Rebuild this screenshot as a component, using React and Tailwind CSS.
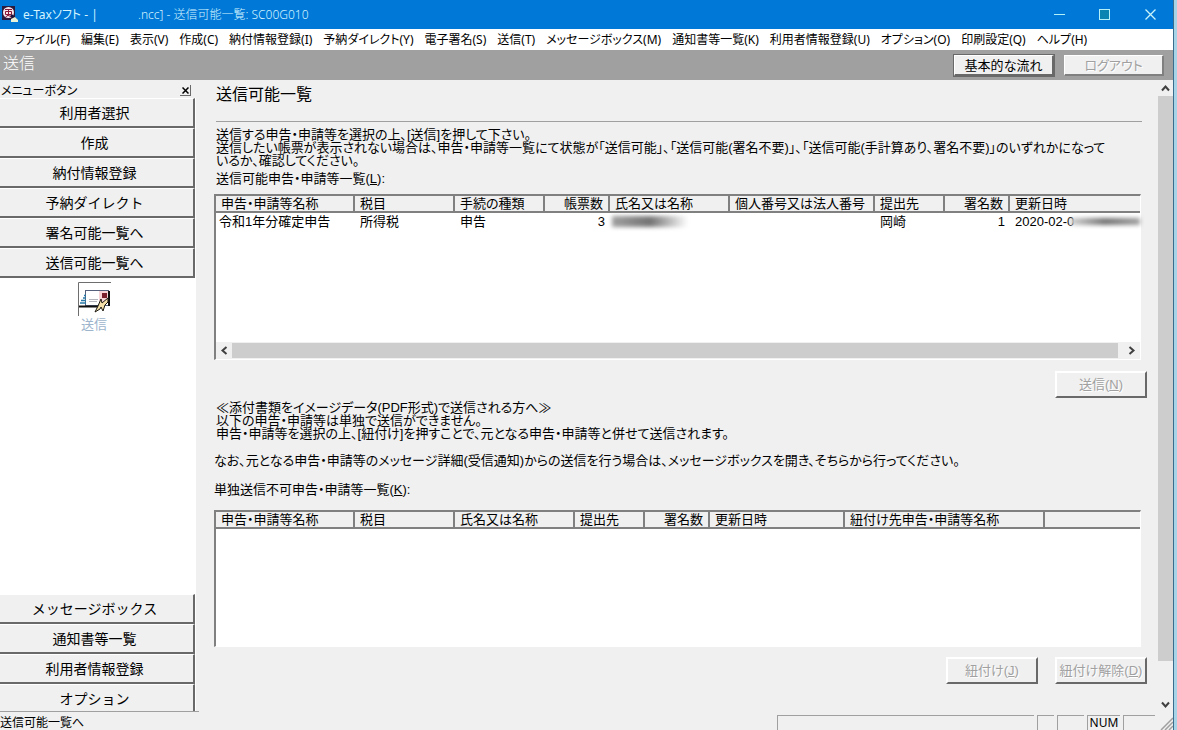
import React from "react";

const menuItems = [
  "ファイル(F)",
  "編集(E)",
  "表示(V)",
  "作成(C)",
  "納付情報登録(I)",
  "予納ダイレクト(Y)",
  "電子署名(S)",
  "送信(T)",
  "メッセージボックス(M)",
  "通知書等一覧(K)",
  "利用者情報登録(U)",
  "オプション(O)",
  "印刷設定(Q)",
  "ヘルプ(H)",
];

const topButtons = [
  "利用者選択",
  "作成",
  "納付情報登録",
  "予納ダイレクト",
  "署名可能一覧へ",
  "送信可能一覧へ",
];

const bottomButtons = [
  "メッセージボックス",
  "通知書等一覧",
  "利用者情報登録",
  "オプション",
];

const sendColumns = [
  { label: "申告・申請等名称", width: "w-[139px]" },
  { label: "税目", width: "w-[100px]" },
  { label: "手続の種類", width: "w-[90px]" },
  { label: "帳票数", width: "w-[65px]", right: true },
  { label: "氏名又は名称", width: "w-[120px]" },
  { label: "個人番号又は法人番号", width: "w-[145px]" },
  { label: "提出先", width: "w-[70px]" },
  { label: "署名数", width: "w-[65px]", right: true },
  { label: "更新日時", width: "", last: true },
];

const linkColumns = [
  { label: "申告・申請等名称", width: "w-[139px]" },
  { label: "税目", width: "w-[100px]" },
  { label: "氏名又は名称", width: "w-[120px]" },
  { label: "提出先", width: "w-[70px]" },
  { label: "署名数", width: "w-[65px]", right: true },
  { label: "更新日時", width: "w-[135px]" },
  { label: "紐付け先申告・申請等名称", width: "w-[200px]" },
  { label: "", width: "", last: true },
];

const AppIcon = () => (
  <svg width="17" height="17" viewBox="0 0 17 17" className="shrink-0">
    <rect x="0" y="0" width="13" height="14" fill="#2b1a3c" />
    <circle cx="6.5" cy="6.5" r="5.5" fill="#f6e6ea" />
    <path
      d="M3 3.5h7M3.5 5.5h6v3h-6zM6.5 3v6l-3 2M5 9l5 2"
      stroke="#8c1838"
      fill="none"
    />
    <path d="M9 9l5 5" stroke="#20123a" strokeWidth="2.5" />
    <path d="M9 13l4-2 3 3v2H9z" fill="#e8f2d8" />
  </svg>
);

const MailIcon = () => (
  <svg width="33" height="34" viewBox="0 0 33 34">
    <path d="M0.5 34V0.5H33" fill="none" stroke="#6e6e6e" />
    <rect x="7.5" y="8.5" width="23" height="15" fill="#fff" stroke="#54607c" />
    <rect x="21" y="9" width="9" height="11" fill="#f6d4d8" />
    <rect x="24" y="11" width="5" height="5" fill="#7c1f2c" />
    <path d="M11 17.5h9M11 19.5h8" stroke="#b4b4bc" />
    <path
      d="M6 13.5h2M5 16h3M3 18.5h5M2 21h6"
      stroke="#2878a8"
      strokeWidth="1.5"
    />
    <path d="M1 24.5h19M31 9v15" stroke="#101010" strokeWidth="2" />
    <path
      d="M30 16l-6 5-1-4-3 7-3 6 5-3 1-2 2 4 2-6 3-3z"
      fill="#f4e0a8"
      stroke="#1c1810"
    />
  </svg>
);

const Chevron = ({ d }) => (
  <svg width="9" height="9" viewBox="0 0 9 9">
    <path d={d} fill="none" stroke="#404040" strokeWidth="2" />
  </svg>
);

const SideButton = ({ label }) => (
  <button
    type="button"
    className="block h-[30px] w-full shrink-0 border-t border-r-2 border-b-2 border-t-white border-r-[#696969] border-b-[#696969] bg-[#f0f0f0] pr-1 text-center text-sm leading-6"
  >
    {label}
  </button>
);

const DisabledButton = ({ label, accessKey }) => (
  <button
    type="button"
    disabled
    className="h-[27px] w-[92px] border-t-2 border-r-2 border-b-2 border-l-2 border-t-white border-r-[#696969] border-b-[#696969] border-l-white bg-[#f0f0f0] text-center whitespace-nowrap text-[#a0a0a0] [text-shadow:1px_1px_0_white]"
  >
    {label}(<u>{accessKey}</u>)
  </button>
);

const HeaderRow = ({ columns }) => (
  <thead>
    <tr>
      {columns.map((col) => (
        <th
          key={col.label}
          scope="col"
          className={`h-[17px] border-b-2 border-[#808080] bg-[#f0f0f0] px-[5px] font-normal ${
            col.right ? "text-right" : "text-left"
          } ${col.last ? "" : "border-r-2"} ${col.width}`}
        >
          {col.label}
        </th>
      ))}
    </tr>
  </thead>
);

const TitleBar = () => (
  <div className="flex h-[29px] shrink-0 items-center bg-[#0078d7] pl-[2px] text-xs text-[#d4f4ff]">
    <AppIcon />
    <span className="ml-1 w-[115px] whitespace-pre [font-feature-settings:'palt']">e-Taxソフト - |</span>
    <span className="font-light">.ncc] - 送信可能一覧: SC00G010</span>
    <div className="ml-auto flex">
      <button type="button" aria-label="最小化" className="flex h-7 w-[45px] items-center justify-center">
        <svg width="11" height="11" viewBox="0 0 11 11">
          <path d="M0 5.5h11" stroke="#b4f0f8" />
        </svg>
      </button>
      <button type="button" aria-label="最大化" className="flex h-7 w-[45px] items-center justify-center">
        <svg width="11" height="11" viewBox="0 0 11 11">
          <rect x="0.5" y="0.5" width="10" height="10" fill="#0a84b0" stroke="#b4f0f8" />
        </svg>
      </button>
      <button type="button" aria-label="閉じる" className="flex h-7 w-[46px] items-center justify-center">
        <svg width="11" height="11" viewBox="0 0 11 11">
          <path d="M0.5 0.5l10 10M10.5 0.5l-10 10" stroke="#c8f4fa" strokeWidth="1.3" />
        </svg>
      </button>
    </div>
  </div>
);

const Sidebar = () => (
  <aside className="flex w-[199px] shrink-0 flex-col overflow-hidden border-b border-[#a0a0a0] pr-[3px]">
    <div className="flex h-[18px] shrink-0 items-center justify-between pt-[3px] pr-[5px] pl-px text-xs leading-[15px]">
      <span className="[font-feature-settings:'palt']">メニューボタン</span>
      <button
        type="button"
        aria-label="閉じる"
        className="flex h-[11px] w-[11px] items-center justify-center border-r border-b border-[#696969]"
      >
        <svg width="7" height="7" viewBox="0 0 7 7">
          <path d="M0.5 0.5l6 6M6.5 0.5l-6 6" stroke="#000" strokeWidth="1.5" />
        </svg>
      </button>
    </div>
    <div className="flex min-h-0 flex-1 flex-col bg-white">
      <div className="pr-px">
        {topButtons.map((label) => (
          <SideButton key={label} label={label} />
        ))}
      </div>
      <button type="button" className="mt-1 flex flex-col items-center self-center pr-2 text-[13px] text-[#9db4cc]">
        <MailIcon />
        <span className="leading-4">送信</span>
      </button>
      <div className="mt-auto -mb-[3px] pr-px">
        {bottomButtons.map((label) => (
          <SideButton key={label} label={label} />
        ))}
      </div>
    </div>
  </aside>
);

const SendTable = () => (
  <div className="mt-[6px] mr-[17px] flex h-[166px] flex-col border-t-2 border-r border-b border-l-2 border-t-[#808080] border-r-white border-b-white border-l-[#808080] bg-white">
    <table
      aria-labelledby="send-label"
      className="w-full table-fixed border-separate border-spacing-0 leading-[15px] whitespace-nowrap"
    >
      <HeaderRow columns={sendColumns} />
      <tbody>
        <tr className="h-[17px]">
          <td className="px-[3px]">令和1年分確定申告</td>
          <td className="px-[5px]">所得税</td>
          <td className="px-[5px]">申告</td>
          <td className="px-[5px] text-right">3</td>
          <td>
            <div className="ml-[2px] h-[11px] w-[76px] bg-linear-to-r from-neutral-400 via-neutral-500 to-transparent blur-[2px]" />
          </td>
          <td />
          <td className="px-[5px]">岡崎</td>
          <td className="px-[5px] text-right">1</td>
          <td className="pl-[5px]">
            <div className="flex items-center">
              2020-02-0
              <div className="-ml-1 h-[7px] flex-1 bg-linear-to-r from-neutral-300 via-neutral-500 to-neutral-400 blur-[2px]" />
            </div>
          </td>
        </tr>
      </tbody>
    </table>
    <div className="mt-auto flex h-[17px] items-center bg-[#f0f0f0]">
      <button type="button" aria-label="左へ" className="flex w-4 justify-center">
        <Chevron d="M6.5 1l-4 3.5 4 3.5" />
      </button>
      <div className="h-[15px] flex-1 bg-[#cdcdcd]" />
      <button type="button" aria-label="右へ" className="flex w-[22px] justify-center pl-1">
        <Chevron d="M2.5 1l4 3.5-4 3.5" />
      </button>
    </div>
  </div>
);

const LinkTable = () => (
  <div className="mt-[11px] mr-[17px] h-[137px] border-t-2 border-r border-b border-l-2 border-t-[#808080] border-r-white border-b-white border-l-[#808080] bg-white">
    <table
      aria-labelledby="link-label"
      className="w-full table-fixed border-separate border-spacing-0 leading-[15px] whitespace-nowrap"
    >
      <HeaderRow columns={linkColumns} />
    </table>
  </div>
);

const Main = () => (
  <main className="min-w-0 flex-1 overflow-hidden pl-[15px] font-['Liberation_Sans','Noto_Sans_CJK_JP',sans-serif] text-[13px] leading-[13px]">
    <h1 className="mr-4 ml-[2px] h-[42px] border-b border-[#a0a0a0] text-base leading-[30px]">
      送信可能一覧
    </h1>
    <p className="mt-[6px] ml-[2px] whitespace-nowrap">
      送信する申告・申請等を選択の上、[送信]を押して下さい。
      <br />
      送信したい帳票が表示されない場合は、申告・申請等一覧にて状態が「送信可能」、「送信可能(署名不要)」、「送信可能(手計算あり、署名不要)」のいずれかになって
      <br />
      いるか、確認してください。
    </p>
    <h2 id="send-label" className="mt-[3px] ml-[2px] leading-[18px]">
      送信可能申告・申請等一覧(<u>L</u>):
    </h2>
    <SendTable />
    <div className="mt-[11px] mr-[11px] flex justify-end">
      <DisabledButton label="送信" accessKey="N" />
    </div>

    <p className="mt-[3px] ml-[2px]">
      ≪添付書類をイメージデータ(PDF形式)で送信される方へ≫
      <br />
      以下の申告・申請等は単独で送信ができません。
      <br />
      申告・申請等を選択の上、[紐付け]を押すことで、元となる申告・申請等と併せて送信されます。
    </p>
    <p className="mt-[14px]">
      なお、元となる申告・申請等のメッセージ詳細(受信通知)からの送信を行う場合は、メッセージボックスを開き、そちらから行ってください。
    </p>
    <h2 id="link-label" className="mt-[14px] leading-[18px]">
      単独送信不可申告・申請等一覧(<u>K</u>):
    </h2>
    <LinkTable />
    <div className="mt-[10px] mr-[11px] flex justify-end gap-[17px]">
      <DisabledButton label="紐付け" accessKey="J" />
      <DisabledButton label="紐付け解除" accessKey="D" />
    </div>
  </main>
);

const StatusBar = () => (
  <footer className="flex h-[18px] shrink-0 gap-[3px] overflow-hidden pt-[3px] text-xs leading-[15px]">
    <span className="flex-1 [font-feature-settings:'palt']">送信可能一覧へ</span>
    <span className="w-[257px] border-t border-l border-[#a0a0a0]" />
    <span className="w-[17px] border-t border-l border-[#a0a0a0]" />
    <span className="w-[27px] border-t border-l border-[#a0a0a0]" />
    <span className="w-[33px] border-t border-l border-[#a0a0a0] text-center leading-[14px]">NUM</span>
    <span className="w-8 border-t border-l border-[#a0a0a0]" />
    <svg width="15" height="15" viewBox="0 0 15 15">
      <path d="M3 15L15 3M7 15l8-8M11 15l4-4" stroke="#a0a0a0" strokeWidth="1.5" />
    </svg>
  </footer>
);

const App = () => {
  return (
    <div className="flex h-screen overflow-hidden bg-[#f0f0f0] font-['Noto_Sans','Noto_Sans_CJK_JP',sans-serif] text-black">
      <div className="flex min-w-0 flex-1 flex-col">
        <TitleBar />
        <nav className="flex h-[21px] shrink-0 items-center gap-[11px] bg-white pl-[15px] text-xs whitespace-nowrap [font-feature-settings:'palt']">
          {menuItems.map((item) => (
            <button key={item} type="button">
              {item}
            </button>
          ))}
        </nav>
        <header className="flex h-[30px] shrink-0 items-center bg-[#a0a0a0] pr-[9px] pl-[3px] text-[13px]">
          <span className="mb-1 text-base leading-5 font-light text-white">送信</span>
          <button
            type="button"
            className="ml-auto h-[21px] w-[100px] border-t border-r-2 border-b-2 border-l border-t-white border-r-[#696969] border-b-[#696969] border-l-white bg-[#f0f0f0] leading-4 outline outline-[#696969] [font-feature-settings:'palt']"
          >
            基本的な流れ
          </button>
          <button
            type="button"
            disabled
            className="ml-[10px] h-[21px] w-[100px] border-t border-r-2 border-b-2 border-l border-t-white border-r-[#808080] border-b-[#808080] border-l-white bg-[#f0f0f0] leading-4 text-[#a0a0a0] [font-feature-settings:'palt'] [text-shadow:1px_1px_0_white]"
          >
            ログアウト
          </button>
        </header>
        <div className="flex min-h-0 flex-1">
          <Sidebar />
          <div className="flex min-w-0 flex-1 [font-feature-settings:'palt']">
            <Main />
            <div className="flex w-[15px] shrink-0 flex-col items-center bg-[#f0f0f0]">
              <button type="button" aria-label="上へ" className="flex h-4 items-center">
                <Chevron d="M1 6.5l3.5-4 3.5 4" />
              </button>
              <div className="w-full flex-1 bg-[#cdcdcd]" />
              <button type="button" aria-label="下へ" className="flex h-[51px] items-end pb-[3px]">
                <Chevron d="M1 2.5l3.5 4 3.5-4" />
              </button>
            </div>
          </div>
        </div>
        <StatusBar />
      </div>
      <div className="w-1 shrink-0 border-l border-[#3c6c8c] bg-[#a8d4e8]" />
    </div>
  );
};

export default App;
